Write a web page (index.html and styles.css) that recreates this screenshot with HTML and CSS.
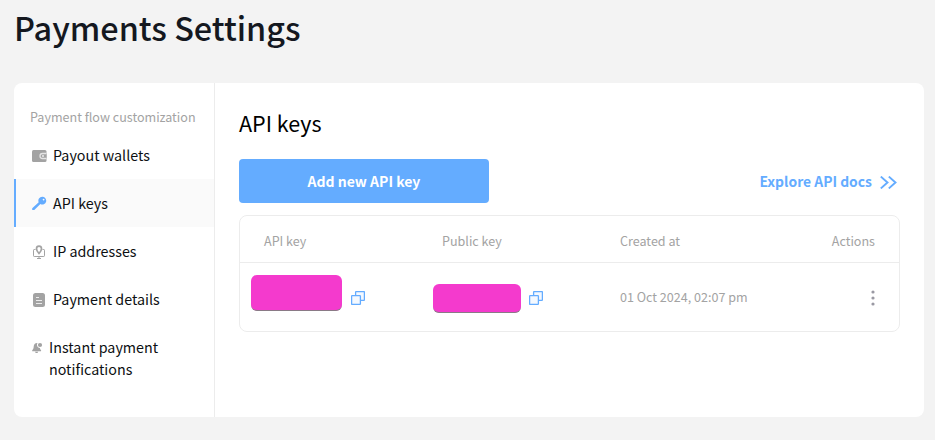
FILE: index.html
```html
<!DOCTYPE html>
<html lang="en">
<head>
    <meta charset="UTF-8">
    <title>Payments Settings</title>
    <link rel="stylesheet" href="styles.css">
</head>
<body>
<h1>Payments Settings</h1>
<main>
    <nav>
        <div class="nav-title">Payment flow customization</div>
        <a href="#">
            <svg class="wallet" width="15" height="12" viewBox="0 0 15 12">
                <rect width="14.500" height="12" rx="1.500" fill="#a3a3a3"/>
                <path fill="#a3a3a3" stroke="#e4e4e4" stroke-width="1.300" d="M14.500 3.500h-4a2.500 2.500 0 0 0 0 5h4"/>
                <circle cx="11" cy="6" r=".9" fill="#f3f3f3"/>
            </svg>
            <span>Payout wallets</span>
        </a>
        <a href="#" class="active">
            <svg class="key" width="15" height="15" viewBox="0 0 15 15">
                <path fill="#64acff" fill-rule="evenodd" d="M10.200.8a3.900 3.900 0 1 1-1.800 7.300L2.300 14H.2v-1.800L6.700 6.300A3.900 3.900 0 0 1 10.200.8zm1.400 1.900a.9.900 0 1 0 0 1.800.9.900 0 0 0 0-1.800z"/>
            </svg>
            <span>API keys</span>
        </a>
        <a href="#">
            <svg class="ip" width="12" height="15" viewBox="0 0 12 15" fill="none" stroke="#a3a3a3">
                <path d="M2.500 4.500H1.200a.7.700 0 0 0-.7.700v5.600c0 .4.300.7.700.7h9.600c.4 0 .7-.3.700-.7V5.200a.7.700 0 0 0-.7-.7H9.500M4 13.500h4M6 11.500v2"/>
                <path stroke-width="1.700" d="M6 8.500C4.300 6.600 3.500 5 3.500 3.700a2.500 2.500 0 0 1 5 0C8.500 5 7.700 6.600 6 8.500z"/>
            </svg>
            <span>IP addresses</span>
        </a>
        <a href="#">
            <svg class="details" width="12" height="14" viewBox="0 0 12 14">
                <rect width="12" height="14" rx="2.500" fill="#a3a3a3"/>
                <path stroke="#ececec" d="M3 4.500h3M3 7.500h6M3 10.500h6"/>
            </svg>
            <span>Payment details</span>
        </a>
        <a href="#" class="tall">
            <svg class="bell" width="11" height="12" viewBox="0 0 11 12">
                <circle cx="8" cy="3" r="2.100" fill="#a3a3a3"/>
                <path fill="#a3a3a3" d="M5.500 1C3 .8 1.800 2.400 1.700 4.500 1.600 6.500 1.200 7.300.2 8.200v1h8.900v-1C8.300 7.500 8 6.800 7.900 6A3.200 3.200 0 0 1 5.500 1zM3 9.700h3.200c-.2.900-.7 1.400-1.600 1.400S3.200 10.600 3 9.700z"/>
            </svg>
            <span>Instant payment notifications</span>
        </a>
    </nav>
    <section>
        <h2>API keys</h2>
        <div class="toolbar">
            <button>Add new API key</button>
            <a href="#">
                <span>Explore API docs</span>
                <svg width="17" height="13" viewBox="0 0 17 13" fill="none" stroke="#64acff" stroke-width="1.900">
                    <path d="M.8.600l6.700 5.900-6.700 5.900M8.800.600l6.700 5.900-6.700 5.900"/>
                </svg>
            </a>
        </div>
        <div class="table">
            <div class="row head">
                <div>API key</div>
                <div>Public key</div>
                <div>Created at</div>
                <div class="actions">Actions</div>
            </div>
            <div class="row">
                <div class="secret">
                    <span class="mask"></span>
                    <svg width="14" height="14" viewBox="0 0 14 14" fill="#f4f9ff" stroke="#64acff" stroke-width="1.300">
                        <rect x="4.600" y=".6" width="8.800" height="8.800" rx=".6"/>
                        <rect x=".6" y="4.600" width="8.800" height="8.800" rx=".6"/>
                    </svg>
                </div>
                <div class="secret">
                    <span class="mask small"></span>
                    <svg width="14" height="14" viewBox="0 0 14 14" fill="#f4f9ff" stroke="#64acff" stroke-width="1.300">
                        <rect x="4.600" y=".6" width="8.800" height="8.800" rx=".6"/>
                        <rect x=".6" y="4.600" width="8.800" height="8.800" rx=".6"/>
                    </svg>
                </div>
                <div>01 Oct 2024, 02:07 pm</div>
                <div class="actions">
                    <svg width="4" height="16" viewBox="0 0 4 16" fill="#9a99a3">
                        <circle cx="2" cy="2" r="1.600"/>
                        <circle cx="2" cy="8" r="1.600"/>
                        <circle cx="2" cy="14" r="1.600"/>
                    </svg>
                </div>
            </div>
        </div>
    </section>
</main>
</body>
</html>
```

FILE: styles.css
```css
* {
    box-sizing: border-box;
}

body {
    margin: 0;
    height: 440px;
    padding: 0 11px 0 14px;
    background-color: #f3f3f3;
    color: #14181f;
    font-family: "Noto Sans CJK SC", "Open Sans", sans-serif;
    font-size: 14.3px;
    line-height: 22px;
    overflow: hidden;
}

a {
    color: inherit;
    text-decoration: none;
}

svg {
    display: block;
    flex: none;
}

h1 {
    margin: 0;
    padding-top: 3px;
    height: 83px;
    font-size: 32.4px;
    font-weight: 500;
    line-height: 48px;
}

main {
    display: flex;
    height: 334px;
    border-radius: 8px;
    background-color: #fff;
    overflow: hidden;
}

nav {
    width: 201px;
    flex: none;
    padding-top: 23px;
    border-right: 1px solid #ececec;
}

.nav-title {
    height: 25px;
    padding-left: 16px;
    color: #a3a3a3;
    font-size: 12.55px;
    white-space: nowrap;
}

nav a {
    display: flex;
    align-items: center;
    height: 48px;
    padding: 1px 16px 0;
    border-left: 2px solid transparent;
    color: #0d0f12;
}

nav a span {
    padding-bottom: 2px;
}

nav a.active {
    background-color: #fafafa;
    border-left-color: #64acff;
}

nav a.tall {
    height: 70px;
    align-items: flex-start;
    padding-top: 13px;
}

.wallet { margin-right: 6px; }
.key { margin-right: 6px; }
.ip { margin: 1px 8px 0 1px; }
.details { margin: 0 8px 0 1px; }
.bell { margin: 6px 6px 0 0; }

section {
    flex: 1;
    padding: 24px 24px 0;
}

h2 {
    margin: 0 0 20px;
    color: #000;
    font-size: 21.5px;
    font-weight: 400;
    line-height: 32px;
}

.toolbar {
    display: flex;
    justify-content: space-between;
    align-items: center;
    margin-bottom: 12px;
}

button {
    width: 250px;
    height: 44px;
    border: none;
    border-radius: 4px;
    background-color: #64acff;
    color: #fff;
    font-family: inherit;
    font-size: 14px;
    font-weight: 700;
}

.toolbar a {
    display: flex;
    align-items: center;
    gap: 8px;
    padding: 2px 3px 0 0;
    color: #64acff;
    font-size: 13.9px;
    font-weight: 700;
}

.toolbar a span {
    padding-bottom: 2px;
}

.table {
    width: 661px;
    border: 1px solid #ececec;
    border-radius: 8px;
    color: #a3a3a3;
    font-size: 12.55px;
}

.row {
    display: grid;
    grid-template-columns: 178px 178px 178px 1fr;
    align-items: center;
    height: 68px;
    padding: 0 24px;
}

.row.head {
    height: 47px;
    padding-top: 4px;
    border-bottom: 1px solid #ececec;
}

.actions {
    display: flex;
    justify-content: flex-end;
}

.actions svg {
    margin-top: 2px;
}

.secret {
    display: flex;
    align-items: center;
    gap: 9px;
    margin-left: -13px;
}

.secret svg {
    margin-top: 1px;
}

.mask {
    width: 91px;
    height: 36px;
    margin-bottom: 9px;
    border-radius: 6px;
    border-bottom: 1px solid #8a7a86;
    background-color: #f43acd;
}

.mask.small {
    width: 88px;
    height: 29px;
    margin: 2px -1px 0 4px;
}
```
